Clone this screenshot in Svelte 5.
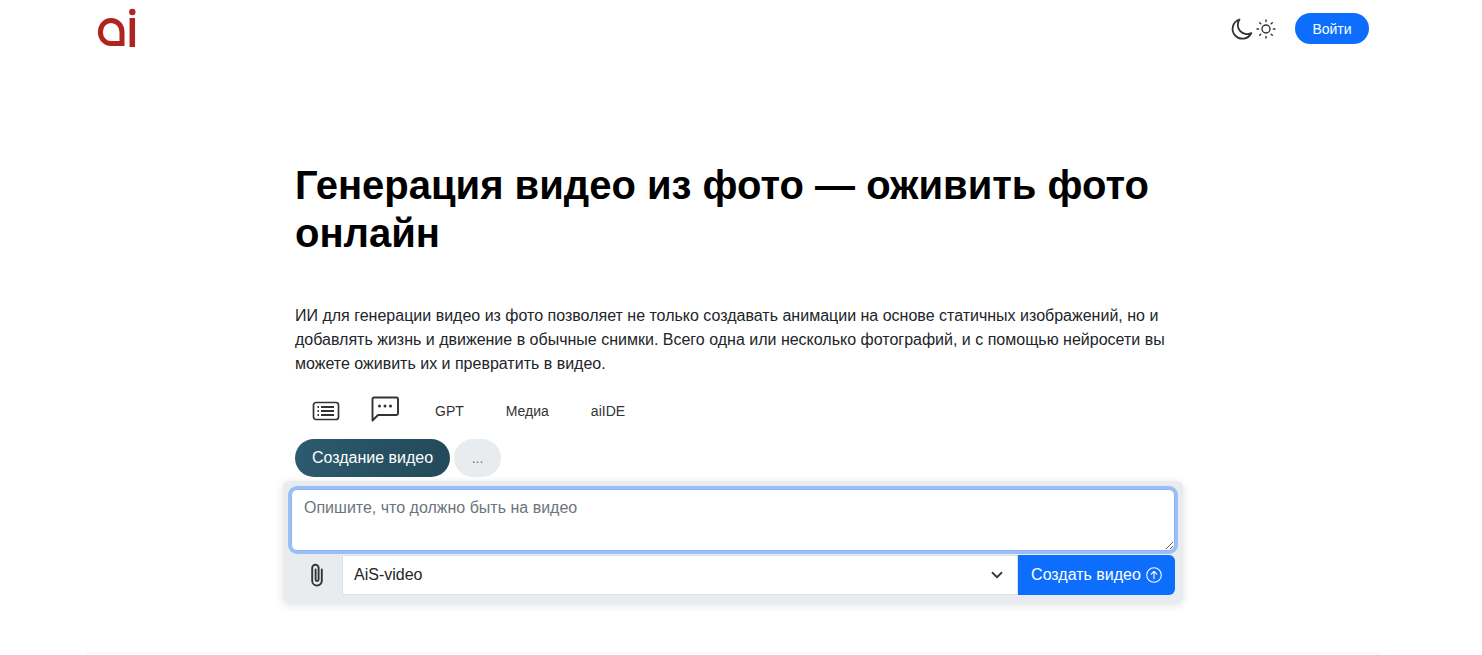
<script>
  const navItems = ["GPT", "Медиа", "aiIDE"];
  let prompt = "";
</script>

<div class="page">
  <header class="topbar">
    <a class="logo" href="#top" aria-label="ai">
      <svg width="40" height="42" viewBox="0 0 40 42">
        <path d="M25 35.600H14C7.800 35.600 3.400 30.400 3.400 24S7.800 12.400 14 12.400 25 17.600 25 24z" fill="none" stroke="#b0241f" stroke-width="5" />
        <path d="M35.300 10v29" fill="none" stroke="#b0241f" stroke-width="5.500" />
        <circle cx="35.300" cy="4" r="3.200" fill="#b0241f" />
      </svg>
    </a>
    <div class="actions">
      <svg class="moon" width="24" height="24" viewBox="0 0 24 24">
        <path d="M9.500 2.500a9.800 9.800 0 1 0 11.800 13.500 9.200 9.200 0 0 1-11.800-13.500z" fill="none" stroke="#333" stroke-width="1.800" stroke-linejoin="round" />
      </svg>
      <svg class="sun" width="20" height="20" viewBox="0 0 20 20" fill="none" stroke="#333" stroke-width="1.400" stroke-linecap="round">
        <circle cx="10" cy="10" r="4" />
        <path d="M10 1v1.600M10 17.400V19M1 10h1.600M17.400 10H19M3.700 3.700l1.100 1.100M15.200 15.200l1.100 1.100M3.700 16.300l1.100-1.100M15.200 4.800l1.100-1.100" />
      </svg>
      <button class="login" type="button">Войти</button>
    </div>
  </header>

  <main class="content">
    <h1>Генерация видео из фото — оживить фото онлайн</h1>
    <p class="lead">ИИ для генерации видео из фото позволяет не только создавать анимации на основе статичных изображений, но и добавлять жизнь и движение в обычные снимки. Всего одна или несколько фотографий, и с помощью нейросети вы можете оживить их и превратить в видео.</p>

    <nav class="tabs">
      <span class="tab-icon">
        <svg width="28" height="22" viewBox="0 0 28 22" fill="none" stroke="#333" stroke-width="1.700">
          <rect x="1.500" y="2.500" width="25" height="17" rx="2.500" />
          <path d="M9 7h13M9 11h13M9 15h13M5.500 7h1.500M5.500 11h1.500M5.500 15h1.500" stroke-width="1.800" />
        </svg>
      </span>
      <span class="tab-icon chat">
        <svg width="28" height="26" viewBox="0 0 28 26" fill="none" stroke="#333" stroke-width="1.900">
          <path d="M3 1.500h22.500a1.500 1.500 0 0 1 1.500 1.500v14.500a1.500 1.500 0 0 1-1.500 1.500H7L1.500 24.500V3A1.500 1.500 0 0 1 3 1.500z" stroke-linejoin="round" />
          <circle cx="8.500" cy="10" r="1.500" fill="#333" stroke="none" />
          <circle cx="14" cy="10" r="1.500" fill="#333" stroke="none" />
          <circle cx="19.500" cy="10" r="1.500" fill="#333" stroke="none" />
        </svg>
      </span>
      {#each navItems as item}
        <span class="tab">{item}</span>
      {/each}
    </nav>

    <div class="pills">
      <button class="pill active" type="button">Создание видео</button>
      <button class="pill more" type="button">...</button>
    </div>
  </main>

  <section class="composer">
    <textarea bind:value={prompt} placeholder="Опишите, что должно быть на видео"></textarea>
    <div class="controls">
      <span class="attach">
        <svg width="16" height="24" viewBox="0 0 16 24" fill="none" stroke="#333" stroke-width="1.900" stroke-linecap="round">
          <path d="M12.800 6.500v11.300a4.800 4.800 0 0 1-9.600 0V5a3.200 3.200 0 0 1 6.400 0v11.500a1.500 1.500 0 0 1-3 0V6.500" />
        </svg>
      </span>
      <div class="select">
        <span>AiS-video</span>
        <svg width="12" height="12" viewBox="0 0 16 16" fill="none" stroke="#343a40" stroke-width="2.400" stroke-linecap="round" stroke-linejoin="round">
          <path d="m2 5 6 6 6-6" />
        </svg>
      </div>
      <button class="submit" type="button">
        Создать видео
        <svg width="16" height="16" viewBox="0 0 16 16" fill="none" stroke="#fff" stroke-width="1.100" stroke-linecap="round" stroke-linejoin="round">
          <circle cx="8" cy="8" r="7.300" />
          <path d="M8 11.800V4.500M5.200 7.200 8 4.500l2.800 2.700" />
        </svg>
      </button>
    </div>
  </section>

  <div class="footer-line"></div>
</div>

<style>
  :global(body) {
    margin: 0;
    background: #fff;
    font-family: "Liberation Sans", Arial, sans-serif;
    color: #212529;
  }

  .page {
    height: 655px;
    overflow: hidden;
    display: flex;
    flex-direction: column;
  }

  .topbar {
    height: 60px;
    padding: 0 113px 0 97px;
    display: flex;
    justify-content: space-between;
    align-items: center;
  }

  .logo {
    display: block;
    height: 42px;
    margin-top: -2px;
  }

  .actions {
    display: flex;
    align-items: center;
    margin-top: -3px;
  }

  .moon {
    margin-right: 2px;
  }

  .login {
    margin-left: 19px;
    width: 74px;
    height: 31px;
    border: 0;
    border-radius: 16px;
    background: #0d6efd;
    color: #fff;
    font: 14px "Liberation Sans", Arial, sans-serif;
  }

  .content {
    width: 880px;
    margin: 0 0 0 295px;
  }

  h1 {
    margin: 101px 0 0;
    font-size: 40px;
    line-height: 48px;
    font-weight: 700;
    color: #000;
  }

  .lead {
    margin: 46.5px 0 0;
    font-size: 16px;
    line-height: 24.3px;
    color: #212529;
  }

  .tabs {
    display: flex;
    align-items: center;
    height: 40px;
    margin-top: 14.3px;
    font-size: 14px;
    color: #333;
  }

  .tab-icon {
    display: flex;
    margin-left: 17px;
  }

  .chat {
    margin-left: 31px;
    margin-top: -4px;
  }

  .tab {
    margin-left: 37px;
    margin-top: 1px;
  }

  .tab:nth-of-type(3) {
    margin-left: 36px;
  }

  .tab:nth-of-type(n + 4) {
    margin-left: 42px;
  }

  .pills {
    display: flex;
    gap: 4px;
    margin-top: 8px;
  }

  .pill {
    height: 38px;
    padding: 0;
    border: 0;
    border-radius: 19px;
    font: 16px "Liberation Sans", Arial, sans-serif;
  }

  .active {
    width: 155px;
    background: linear-gradient(90deg, #2c5a6e, #234a5a);
    color: #fff;
  }

  .more {
    width: 47px;
    background: #e9ecef;
    color: #6c757d;
    font-size: 14px;
  }

  .composer {
    box-sizing: border-box;
    width: 900px;
    height: 122px;
    margin: 4px 0 0 283px;
    padding: 8px;
    border-radius: 6px;
    background: #e9ecef;
    box-shadow: 0 2px 8px rgba(0, 0, 0, 0.12);
  }

  textarea {
    display: block;
    box-sizing: border-box;
    width: 884px;
    height: 62px;
    padding: 6px 12px;
    border: 1px solid #86b7fe;
    border-radius: 6px;
    outline: 0;
    box-shadow: 0 0 0 3px rgba(13, 110, 253, 0.35);
    background: #fff;
    color: #212529;
    font: 16px/1.5 "Liberation Sans", Arial, sans-serif;
  }

  textarea::placeholder {
    color: #6c757d;
    opacity: 1;
  }

  .controls {
    display: flex;
    height: 40px;
    margin-top: 4px;
  }

  .attach {
    width: 51px;
    display: flex;
    justify-content: center;
    align-items: center;
  }

  .select {
    flex: 1;
    display: flex;
    justify-content: space-between;
    align-items: center;
    padding: 0 14px 0 11px;
    background: #fff;
    border: 1px solid #dee2e6;
    font-size: 16px;
  }

  .submit {
    width: 157px;
    display: flex;
    justify-content: center;
    align-items: center;
    gap: 5px;
    padding: 0;
    border: 0;
    border-radius: 0 6px 6px 0;
    background: #0d6efd;
    color: #fff;
    font: 16px "Liberation Sans", Arial, sans-serif;
  }

  .footer-line {
    width: 1295px;
    height: 3px;
    margin: 49px 0 0 86px;
    background: #f8f9fa;
  }
</style>
